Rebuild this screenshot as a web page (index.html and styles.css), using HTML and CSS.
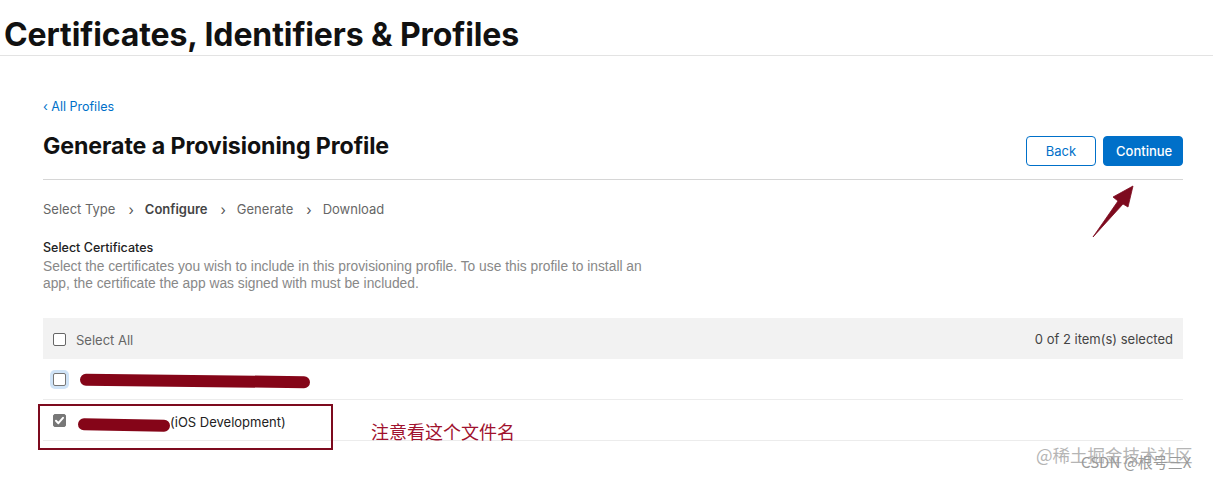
FILE: index.html
```html
<!DOCTYPE html>
<html>
<head>
<meta charset="utf-8">
<link rel="stylesheet" href="styles.css">
</head>
<body>
<header class="top">
  <h1 class="site-title">Certificates, Identifiers &amp; Profiles</h1>
</header>
<main class="content">
  <a class="back-link" href="#">‹ All Profiles</a>
  <div class="page-head">
    <h2 class="page-title">Generate a Provisioning Profile</h2>
    <div class="actions">
      <button class="btn btn-outline">Back</button>
      <button class="btn btn-primary">Continue</button>
    </div>
  </div>
  <nav class="steps">
    <span>Select Type</span><span class="sep">›</span>
    <span class="current">Configure</span><span class="sep">›</span>
    <span>Generate</span><span class="sep">›</span>
    <span>Download</span>
  </nav>
  <section class="section">
    <h3 class="section-title">Select Certificates</h3>
    <p class="section-desc">Select the certificates you wish to include in this provisioning profile. To use this profile to install an app, the certificate the app was signed with must be included.</p>
  </section>
  <div class="table">
    <div class="table-head">
      <label class="check-label"><span class="cb"></span>Select All</label>
      <span class="count">0 of 2 item(s) selected</span>
    </div>
    <div class="row">
      <span class="cb cb-focus"></span>
      <span class="scribble scribble-1"></span>
    </div>
    <div class="row row-2">
      <span class="cb cb-checked"><svg width="13" height="13" viewBox="0 0 13 13"><path d="M3 6.8 L5.4 9.2 L10 3.8" fill="none" stroke="#fff" stroke-width="2" stroke-linecap="round" stroke-linejoin="round"/></svg></span>
      <span class="scribble scribble-2"></span><span class="row-text">(iOS Development)</span>
      <span class="note">注意看这个文件名</span>
      <span class="annot-box"></span>
    </div>
  </div>
</main>
<svg class="arrow" width="50" height="60" viewBox="0 0 50 60">
  <path d="M3 55 L28 19 L23 15 L43 4 L38 25 L33 22 Z" fill="#7d0a1e" stroke="#7d0a1e" stroke-width="0.8" stroke-linejoin="round"/>
</svg>
<div class="watermark">
  <span class="wm-1">@稀土掘金技术社区</span>
  <span class="wm-2">CSDN @根号三X</span>
</div>
</body>
</html>
```
FILE: styles.css
```css
* { box-sizing: border-box; }
html, body { margin: 0; padding: 0; background: #fff; }
body {
  font-family: "Inter", "Noto Sans CJK SC", sans-serif;
  color: #1d1d1f;
  width: 1213px;
  height: 481px;
  overflow: hidden;
  position: relative;
}
.top {
  border-bottom: 1px solid #e3e3e3;
  height: 56px;
  padding-left: 4px;
}
.site-title {
  margin: 0;
  padding-top: 16px;
  font-size: 32px;
  line-height: 38px;
  font-weight: 700;
  letter-spacing: -0.1px;
  color: #111;
}
.content {
  margin: 0 30px 0 43px;
  padding-top: 43px;
}
.back-link {
  display: block;
  font-size: 12.5px;
  line-height: 16px;
  color: #0070c9;
  text-decoration: none;
}
.page-head {
  display: flex;
  justify-content: space-between;
  align-items: flex-start;
  border-bottom: 1px solid #d6d6d6;
  padding-top: 16px;
  height: 65px;
}
.page-title {
  margin: 0;
  font-size: 23.2px;
  line-height: 30px;
  font-weight: 700;
  letter-spacing: -0.1px;
  color: #111;
}
.actions {
  display: flex;
  gap: 7px;
  padding-top: 5px;
}
.btn {
  font-family: "Inter", sans-serif;
  font-size: 13px;
  height: 30px;
  border-radius: 4px;
  padding: 0 12px;
  cursor: pointer;
}
.btn-outline {
  width: 70px;
  background: #fff;
  border: 1px solid #0070c9;
  color: #0070c9;
}
.btn-primary {
  width: 80px;
  background: #0070c9;
  border: 1px solid #0070c9;
  color: #fff;
  font-weight: 500;
}
.steps {
  display: flex;
  align-items: center;
  padding-top: 20px;
  font-size: 13px;
  line-height: 16px;
  color: #666;
}
.steps .sep {
  margin: 2px 11px 0 13px;
  font-size: 14px;
  color: #555;
}
.steps .current { font-weight: 600; color: #444; }
.section { padding-top: 21px; }
.section-title {
  margin: 0;
  font-size: 12.5px;
  line-height: 17px;
  font-weight: 500;
  color: #222;
}
.section-desc {
  margin: 2px 0 0;
  width: 612px;
  font-family: "Liberation Sans", Arial, sans-serif;
  font-size: 13.8px;
  line-height: 17px;
  color: #888;
}
.table { margin-top: 26px; }
.table-head {
  display: flex;
  justify-content: space-between;
  align-items: center;
  background: #f2f2f2;
  height: 41px;
  padding: 0 10px;
  font-size: 13px;
  color: #666;
}
.table-head .count { color: #444; font-size: 13px; }
.check-label { display: flex; align-items: center; gap: 10px; padding-top: 2px; }
.cb {
  display: inline-block;
  width: 13px;
  height: 13px;
  border: 1px solid #666;
  border-radius: 2px;
  background: #fff;
  flex: none;
}
.cb-focus {
  box-shadow: 0 0 0 3px #cfe3f7;
  border-color: #777;
}
.cb-checked {
  background: #777;
  border-color: #777;
  display: flex;
  align-items: center;
  justify-content: center;
}
.cb-checked svg { display: block; margin: -1px; }
.row {
  position: relative;
  display: flex;
  align-items: center;
  height: 41px;
  padding-left: 10px;
  border-bottom: 1px solid #ececec;
}
.row-2 { align-items: flex-start; padding-top: 14px; }
.scribble {
  display: inline-block;
  background: #850518;
  border-radius: 8px;
}
.scribble-1 {
  width: 230px;
  height: 12px;
  margin-left: 14px;
  margin-top: 3px;
  transform: rotate(0.6deg);
}
.scribble-2 {
  width: 92px;
  height: 12px;
  margin-left: 12px;
  margin-top: 5px;
  transform: rotate(1deg);
}
.row-text {
  font-size: 13px;
  line-height: 16px;
  color: #222;
}
.note {
  position: absolute;
  left: 328px;
  top: 20px;
  font-family: "Noto Sans CJK SC", sans-serif;
  font-size: 18px;
  line-height: 22px;
  color: #a0122e;
}
.annot-box {
  position: absolute;
  left: -5px;
  top: 4px;
  width: 295px;
  height: 46px;
  border: 2px solid #7d0a1e;
}
.arrow {
  position: absolute;
  left: 1090px;
  top: 182px;
}
.watermark {
  position: absolute;
  left: 1036px;
  top: 444px;
  width: 180px;
  height: 30px;
  font-family: "Noto Sans CJK SC", sans-serif;
  color: #aaa;
}
.wm-1 { position: absolute; left: 0; top: 0; font-size: 17.5px; line-height: 22px; color: #b5b5b5; }
.wm-2 { position: absolute; left: 45px; top: 9px; font-size: 15px; line-height: 18px; color: #999; }
```
